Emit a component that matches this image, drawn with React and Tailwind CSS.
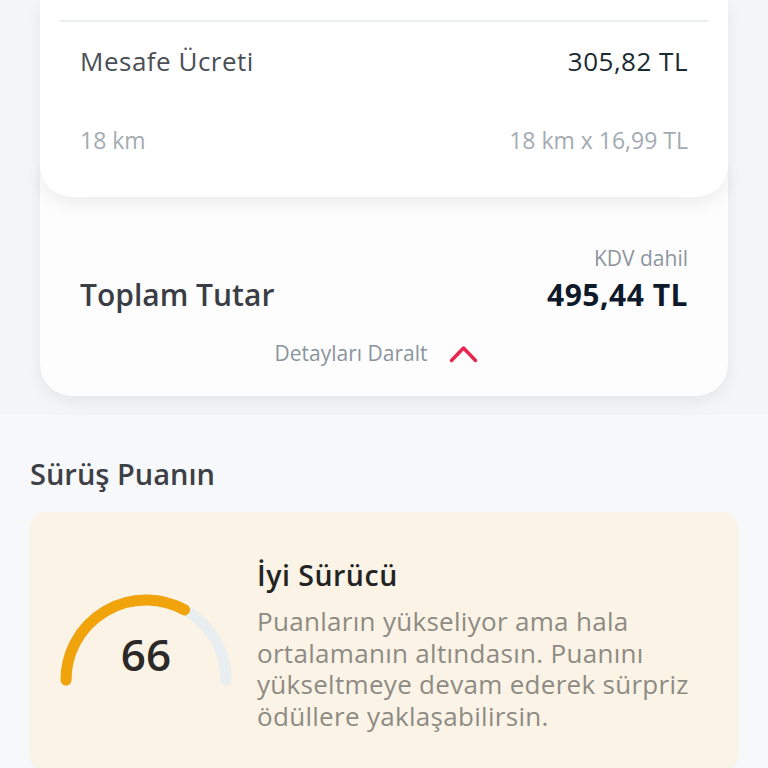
import React from "react";

const font = { fontFamily: "'Open Sans', 'Noto Sans', sans-serif", fontVariantLigatures: "none" };

function Gauge({ value }) {
  const t = (value / 100) * Math.PI;
  const x = 86 - 80 * Math.cos(t);
  const y = 86 - 80 * Math.sin(t);
  return (
    <svg width="172" height="92" viewBox="0 0 172 92" className="shrink-0 mt-[36px]">
      <path d="M 6 86 A 80 80 0 0 1 166 86" fill="none" stroke="#e9eef0" strokeWidth="11" strokeLinecap="round" />
      <path d={`M 6 86 A 80 80 0 0 1 ${x.toFixed(2)} ${y.toFixed(2)}`} fill="none" stroke="#f0a30a" strokeWidth="11" strokeLinecap="round" />
      <text x="86" y="77" textAnchor="middle" fontSize="44" fontWeight="600" fill="#2b2a28" style={font}>{value}</text>
    </svg>
  );
}

export default function App() {
  return (
    <div className="w-[768px] h-[768px] overflow-hidden bg-[#f7f8fa]" style={font}>
      <div className="bg-[#f3f5f6] px-10 pb-[19px]">
        <div className="relative z-10 bg-white rounded-b-[32px] shadow-[0_8px_16px_rgba(0,0,0,0.06)] pt-5 px-5 pb-[43px]">
          <div className="h-[2px] bg-[#eceff1]" />
          <div className="mt-[23px] px-5 flex justify-between items-center h-8 text-[26px] tracking-[0.5px]">
            <span className="text-[#4a4f55]">Mesafe Ücreti</span>
            <span className="text-[#1a2a33]">305,82 TL</span>
          </div>
          <div className="mt-[49px] px-5 flex justify-between items-center h-7 text-[23px] text-[#a3abb1]">
            <span>18 km</span>
            <span>18 km x 16,99 TL</span>
          </div>
        </div>
        <div className="-mt-8 bg-[#fdfdfd] rounded-b-[32px] shadow-[0_6px_16px_rgba(0,0,0,0.06)] pt-[81px] px-10 pb-[29px]">
          <div className="flex justify-end h-[26px] items-center text-[21px] text-[#8c969e]">KDV dahil</div>
          <div className="mt-1 flex justify-between items-center h-9">
            <span className="text-[30px] font-semibold text-[#3a3d45]">Toplam Tutar</span>
            <span className="text-[30px] font-bold tracking-[0.5px] text-[#0e1a2b]">495,44 TL</span>
          </div>
          <div className="mt-[29px] flex justify-center items-center h-[26px] gap-[22px] -ml-[15px]">
            <span className="text-[21px] text-[#8a959d]">Detayları Daralt</span>
            <svg width="29" height="18" viewBox="0 0 29 18">
              <path d="M 2.5 15.5 L 14.5 3 L 26.5 15.5" fill="none" stroke="#e8254f" strokeWidth="3.5" strokeLinecap="round" strokeLinejoin="round" />
            </svg>
          </div>
        </div>
      </div>
      <div className="px-[30px]">
        <div className="pt-[42px] h-[76px] flex items-end">
          <span className="text-[29px] font-semibold text-[#3d4047] leading-[34px]">Sürüş Puanın</span>
        </div>
        <div className="mt-[21px] bg-[#faf3e6] rounded-2xl pt-[46px] pl-[30px] pr-[30px] pb-10 flex gap-[25px]">
          <Gauge value={66} />
          <div className="flex flex-col">
            <div className="text-[28.5px] font-semibold tracking-[0.5px] text-[#232323] leading-[34px]">İyi Sürücü</div>
            <div className="mt-[14px] text-[26px] tracking-[0.3px] text-[#8e8b84] leading-[31.5px]">
              <div>Puanların yükseliyor ama hala</div>
              <div>ortalamanın altındasın. Puanını</div>
              <div>yükseltmeye devam ederek sürpriz</div>
              <div>ödüllere yaklaşabilirsin.</div>
            </div>
          </div>
        </div>
      </div>
    </div>
  );
}
